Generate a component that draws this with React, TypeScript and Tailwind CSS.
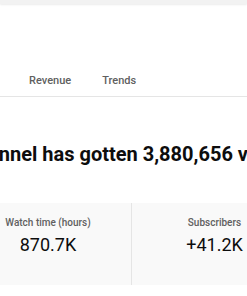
const stats = [
  { label: "Watch time (hours)", value: "870.7K" },
  { label: "Subscribers", value: "+41.2K" },
];

export default function App() {
  return (
    <div
      className="w-[247px] h-[296px] overflow-hidden bg-white"
      style={{ fontFamily: "Roboto, 'Liberation Sans', sans-serif" }}
    >
      <div className="h-[4px] bg-[#f2f2f2] shadow-[0_1px_2px_rgba(0,0,0,0.08)]" />

      <div className="h-[93px] flex items-end border-b border-[#e5e5e5]">
        <div className="flex gap-[31px] pl-[29px] pb-[8px] text-[11px] leading-[14px] font-medium text-[#606060]">
          <span>Revenue</span>
          <span>Trends</span>
        </div>
      </div>

      <div className="pt-[45px] whitespace-nowrap">
        <h1 className="ml-[-80px] text-[20px] font-bold text-[#0d0d0d] leading-[24px]">
          Your channel has gotten 3,880,656 views in the last 28 days
        </h1>
      </div>

      <div className="mt-[37px] flex ml-[-35px] w-[332px] bg-[#f9f9f9] h-[82px]">
        {stats.map((s, i) => (
          <div
            key={s.label}
            className={`w-[166px] flex flex-col items-center pt-[14px] ${i > 0 ? "border-l border-[#e5e5e5]" : ""}`}
          >
            <p className="text-[10px] font-medium text-[#606060] leading-[12px]">{s.label}</p>
            <p className="text-[18px] text-[#0d0d0d] leading-[22px] mt-[5px]">{s.value}</p>
          </div>
        ))}
      </div>
    </div>
  );
}
